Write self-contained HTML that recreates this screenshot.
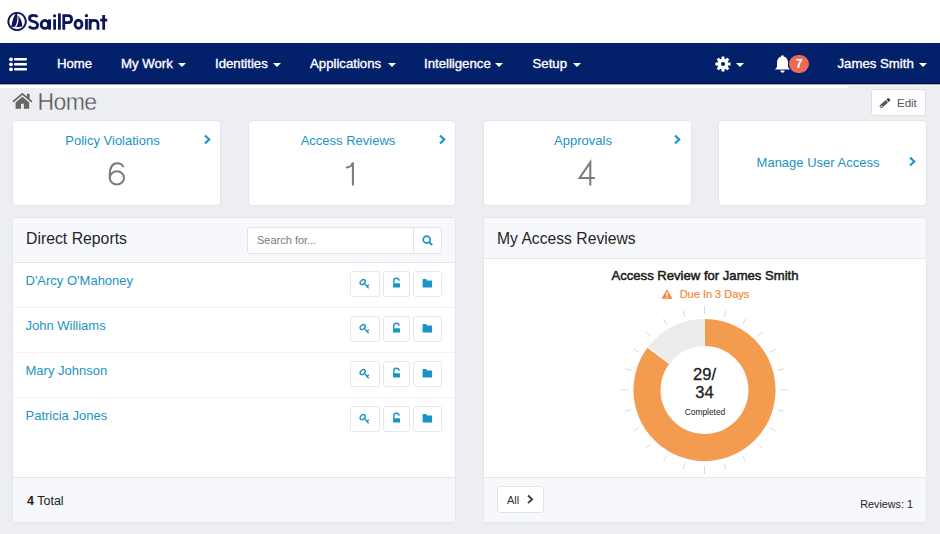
<!DOCTYPE html>
<html><head><meta charset="utf-8">
<style>
*{box-sizing:border-box;margin:0;padding:0}
html,body{width:940px;height:534px;overflow:hidden;background:#eceef2;font-family:"Liberation Sans",sans-serif;position:relative}
.abs{position:absolute}
#hdr{left:0;top:0;width:940px;height:43px;background:#fff}
#nav{left:0;top:43px;width:940px;height:40px;background:#03206a}
#navline{left:0;top:83px;width:940px;height:1px;background:#000a40}
#wh1{left:0;top:84px;width:940px;height:2px;background:linear-gradient(#a3a9c2 0 1px,#fff 1px 2px)}
#wh2{left:0;top:86px;width:848px;height:2px;background:#fff}
.nt{position:absolute;top:55.7px;color:#fff;font-size:13.2px;line-height:16px;white-space:nowrap;-webkit-text-stroke:0.35px #fff}
.caret{position:absolute;width:0;height:0;border-left:4px solid transparent;border-right:4px solid transparent;border-top:4.5px solid #fff;margin-left:-0.5px}
.card{position:absolute;top:120px;height:86px;background:#fff;border:1px solid #e2e5e9;border-radius:4px}
.ctitle{position:absolute;left:0;right:8px;text-align:center;color:#1b93c5;font-size:13px;line-height:16px;white-space:nowrap}
.cnum{position:absolute;left:0;right:0;text-align:center;color:#7a7a7a;font-size:33px;line-height:36px;-webkit-text-stroke:0.9px #fff}
.chev{position:absolute}
.panel{position:absolute;top:217px;height:306px;background:#fff;border:1px solid #e2e5e9;border-radius:4px;overflow:hidden}
.ph{position:absolute;left:0;top:0;right:0;background:#f7f8fb;border-bottom:1px solid #e4e6ed}
.ptitle{position:absolute;color:#262626;font-size:16px;line-height:20px;white-space:nowrap}
.row{position:absolute;left:1px;right:0;height:45px;margin-top:1px;border-bottom:1px solid #f0f2f5}
.name{position:absolute;left:11.5px;top:10px;color:#1b93c5;font-size:13px;line-height:16px;white-space:nowrap}
.ib{position:absolute;top:8px;height:26px;border:1px solid #e5e8ec;border-radius:3px;background:#fff}
.pf{position:absolute;left:0;right:0;bottom:0;height:45px;background:#f7f8fb;border-top:1px solid #e4e6ed}
</style></head><body>
<div id="hdr" class="abs"></div>
<!-- logo -->
<svg class="abs" style="left:0;top:0" width="120" height="43" viewBox="0 0 120 43">
  <g fill="#0b1657">
  <path d="M17.1 12.85 A8.65 8.65 0 1 1 17.09 12.85" fill="none" stroke="#0b1657" stroke-width="1.95"/>
  <path d="M16.5 12.0 C14.2 15.5 12.2 20.5 11.3 26.9 L15.0 26.8 C17.3 23.2 18.0 18 17.1 12.8 Z"/>
  <path d="M18.1 15.4 C21 18.3 22.4 22.5 22.2 26.4 L16.1 27.3 C18.6 23.5 19.0 19.5 18.1 15.4Z"/>
  </g>
  <g fill="none" stroke="#0b1657" stroke-width="2.8">
  <path d="M37.4 17.1 C36.6 15.8 35.2 15.35 33.5 15.35 C31.2 15.35 29.5 16.5 29.5 18.4 C29.5 22.4 37.6 20.6 37.6 24.9 C37.6 27.2 35.6 28.35 33.3 28.35 C31.4 28.35 29.9 27.7 29.0 26.3"/>
  <ellipse cx="44.9" cy="24.4" rx="3.75" ry="3.95"/>
  <path d="M49.6 19.3 V29.7"/>
  <path d="M54.6 19.3 V29.7"/>
  <path d="M59.4 13.4 V29.7"/>
  <path d="M63.8 29.7 V15.7 H68.1 C70.4 15.7 71.6 17.1 71.6 19.2 C71.6 21.3 70.4 22.6 68.1 22.6 H63.8"/>
  <ellipse cx="78.5" cy="24.3" rx="3.5" ry="4.05"/>
  <path d="M86.45 19.0 V29.7"/>
  <path d="M90.1 29.7 V19.0 M90.1 24 C90.1 21.4 91.6 20.4 93.8 20.4 C96.3 20.4 98 21.5 98 24.2 V29.7"/>
  <path d="M103.7 15.0 V29.7 M100.2 20.2 H107.3"/>
  </g>
  <circle cx="54.6" cy="15.85" r="1.65" fill="#0b1657"/>
  <circle cx="86.45" cy="15.7" r="1.65" fill="#0b1657"/>
</svg>
<div id="nav" class="abs"></div>
<div id="navline" class="abs"></div>
<div id="wh1" class="abs"></div>
<div id="wh2" class="abs"></div>
<!-- list icon -->
<svg class="abs" style="left:8px;top:55.5px" width="22" height="17" viewBox="0 0 22 17">
  <circle cx="3" cy="3.3" r="1.9" fill="#fff"/><circle cx="3" cy="8.3" r="1.9" fill="#fff"/><circle cx="3" cy="13.3" r="1.9" fill="#fff"/>
  <rect x="6" y="2" width="13" height="2.6" rx="1" fill="#fff"/><rect x="6" y="7" width="13" height="2.6" rx="1" fill="#fff"/><rect x="6" y="12" width="13" height="2.6" rx="1" fill="#fff"/>
</svg>
<div class="nt" style="left:57px">Home</div>
<div class="nt" style="left:121px">My Work</div><div class="caret" style="left:178px;top:63px"></div>
<div class="nt" style="left:215px">Identities</div><div class="caret" style="left:273.5px;top:63px"></div>
<div class="nt" style="left:310px">Applications</div><div class="caret" style="left:388px;top:63px"></div>
<div class="nt" style="left:424px">Intelligence</div><div class="caret" style="left:495.5px;top:63px"></div>
<div class="nt" style="left:532.5px">Setup</div><div class="caret" style="left:573px;top:63px"></div>
<!-- gear -->
<svg class="abs" style="left:714px;top:55px" width="18" height="18" viewBox="0 0 18 18">
  <g transform="translate(9 9)" fill="#fff">
    <rect x="-1.5" y="-7.6" width="3" height="15.2" rx="0.6"/>
    <rect x="-1.5" y="-7.6" width="3" height="15.2" rx="0.6" transform="rotate(45)"/>
    <rect x="-1.5" y="-7.6" width="3" height="15.2" rx="0.6" transform="rotate(90)"/>
    <rect x="-1.5" y="-7.6" width="3" height="15.2" rx="0.6" transform="rotate(135)"/>
    <circle r="5.5"/>
  </g>
  <circle cx="9" cy="9" r="2.1" fill="#03206a"/>
</svg>
<div class="caret" style="left:736.5px;top:63px"></div>
<!-- bell -->
<svg class="abs" style="left:773px;top:54px" width="19" height="20" viewBox="0 0 19 20">
  <path d="M9.5 1.2 C10.4 1.2 10.8 1.8 10.8 2.6 C13.6 3.3 15 5.6 15 8.6 L15 12.2 C15 13.6 16.2 14.6 17.4 15.6 L1.6 15.6 C2.8 14.6 4 13.6 4 12.2 L4 8.6 C4 5.6 5.4 3.3 8.2 2.6 C8.2 1.8 8.6 1.2 9.5 1.2Z" fill="#fff"/>
  <path d="M7.4 16.6 L11.6 16.6 C11.6 17.9 10.7 18.8 9.5 18.8 C8.3 18.8 7.4 17.9 7.4 16.6Z" fill="#fff"/>
</svg>
<div class="abs" style="left:789px;top:55px;width:20px;height:18px;border-radius:9px;background:#ef6a52;color:#fff;font-weight:700;font-size:12px;line-height:18px;text-align:center">7</div>
<div class="nt" style="left:837.5px">James Smith</div><div class="caret" style="left:919.5px;top:63px"></div>

<!-- page title -->
<svg class="abs" style="left:12px;top:92px" width="22" height="19" viewBox="0 0 22 19">
  <path d="M1.4 9.4 L10.4 1.9 L19.4 9.4" fill="none" stroke="#666" stroke-width="1.8" stroke-linecap="round" stroke-linejoin="round"/>
  <rect x="15" y="1.8" width="2.6" height="5" fill="#666"/>
  <path d="M10.4 4.7 L3.6 10.4 L3.6 16.7 L9 16.7 L9 11.8 L11.8 11.8 L11.8 16.7 L17.2 16.7 L17.2 10.4Z" fill="#666"/>
</svg>
<div class="abs" style="left:37.5px;top:89.7px;color:#555;font-size:23px;line-height:24px;letter-spacing:-0.6px;-webkit-text-stroke:0.35px #eceef2">Home</div>
<div class="abs" style="left:871px;top:89px;width:55px;height:27px;background:#fff;border:1px solid #dcdfe4;border-radius:3px"></div>
<svg class="abs" style="left:879px;top:97px" width="12" height="12" viewBox="0 0 12 12">
  <g transform="translate(6.1 5.9) rotate(-41) scale(0.86)"><path d="M-6.4 -1.9 H2.9 V1.9 H-6.4 C-7.2 1.9 -7.6 1.2 -7.6 0 C-7.6 -1.2 -7.2 -1.9 -6.4 -1.9Z" fill="#555"/><rect x="3.9" y="-1.9" width="2.8" height="3.8" rx="0.4" fill="#333"/><circle cx="-5.8" cy="0.2" r="0.9" fill="#fff"/></g>
</svg>
<div class="abs" style="left:897px;top:96px;color:#555;font-size:11.5px;line-height:14px">Edit</div>

<!-- cards -->
<div class="card" style="left:12px;width:209px"></div>
<div class="card" style="left:248px;width:208px"></div>
<div class="card" style="left:483px;width:209px"></div>
<div class="card" style="left:718px;width:209px"></div>


<!-- card contents -->
<div class="abs" style="left:13px;top:121px;width:207px;height:84px">
  <div class="ctitle" style="top:12px">Policy Violations</div>
</div>
<div class="abs" style="left:248px;top:121px;width:208px;height:84px">
  <div class="ctitle" style="top:12px">Access Reviews</div>
</div>
<div class="abs" style="left:483px;top:121px;width:208px;height:84px">
  <div class="ctitle" style="top:12px">Approvals</div>
</div>
<div class="abs" style="left:718px;top:121px;width:208px;height:84px">
  <div class="ctitle" style="top:34px">Manage User Access</div>
</div>
<svg class="chev" style="left:203px;top:134px" width="9" height="11" viewBox="0 0 9 11"><path d="M2 1.5 L6.2 5.5 L2 9.5" fill="none" stroke="#1b93c5" stroke-width="2.2"/></svg>
<svg class="chev" style="left:438px;top:134px" width="9" height="11" viewBox="0 0 9 11"><path d="M2 1.5 L6.2 5.5 L2 9.5" fill="none" stroke="#1b93c5" stroke-width="2.2"/></svg>
<svg class="chev" style="left:673px;top:134px" width="9" height="11" viewBox="0 0 9 11"><path d="M2 1.5 L6.2 5.5 L2 9.5" fill="none" stroke="#1b93c5" stroke-width="2.2"/></svg>
<svg class="chev" style="left:908px;top:156px" width="9" height="11" viewBox="0 0 9 11"><path d="M2 1.5 L6.2 5.5 L2 9.5" fill="none" stroke="#1b93c5" stroke-width="2.2"/></svg>


<svg class="abs" style="left:0;top:0;pointer-events:none" width="940" height="534" viewBox="0 0 940 534">
  <g fill="none" stroke="#7b7b7b" stroke-width="2.05" stroke-linecap="butt">
    <ellipse cx="116.9" cy="177.9" rx="7.1" ry="6.6"/>
    <path d="M123.5 167.3 C122.6 164.6 120.4 163.2 117.3 163.2 C111.9 163.2 109.7 168.3 109.7 175.5 C109.7 177.2 109.8 178.3 109.9 179"/>
    <path d="M352.9 185.4 V162.4 C352.2 165.6 350.2 167.4 346 167.4"/>
    <path d="M590.3 185.4 V162.4 L579.6 178 H595"/>
  </g>
</svg>

<!-- left panel -->
<div class="panel" style="left:12px;width:444px">
  <div class="ph" style="height:45px">
    <div class="ptitle" style="left:13px;top:11px;font-size:15.8px">Direct Reports</div>
    <div class="abs" style="left:234px;top:9px;width:167px;height:27px;background:#fff;border:1px solid #e0e3e8;border-radius:3px 0 0 3px"></div>
    <div class="abs" style="left:244px;top:15px;color:#7b7b7b;font-size:11px;line-height:14px">Search for...</div>
    <div class="abs" style="left:400px;top:9px;width:29px;height:27px;background:#fff;border:1px solid #e0e3e8;border-radius:0 3px 3px 0"></div>
    <svg class="abs" style="left:408px;top:16px" width="13" height="13" viewBox="0 0 13 13"><circle cx="5.7" cy="5.6" r="3.45" fill="none" stroke="#1b93c5" stroke-width="1.65"/><path d="M8.2 8.1 L10.6 10.5" stroke="#1b93c5" stroke-width="2" stroke-linecap="round"/></svg>
  </div>
  <div class="row" style="top:44px"><div class="name">D'Arcy O'Mahoney</div>
    <div class="ib" style="left:336px;width:30px"></div><div class="ib" style="left:369px;width:27px"></div><div class="ib" style="left:399px;width:29px"></div>
    <svg class="abs" style="left:341px;top:11px" width="20" height="20" viewBox="0 0 20 20"><g fill="none" stroke="#1b93c5" stroke-width="1.35"><ellipse cx="7.7" cy="8.1" rx="2.9" ry="2.0" transform="rotate(-40 7.7 8.1)"/><path d="M9.7 9.8 L13.6 14.2 M12.0 12.3 L13.9 10.8"/></g></svg>
    <svg class="abs" style="left:374px;top:11px" width="16" height="16" viewBox="0 0 16 16"><path d="M5.8 9.6 V6.8 C5.8 5.2 7 4.3 8.4 4.3 C9.8 4.3 11 5.2 11 6.7" fill="none" stroke="#1b93c5" stroke-width="1.4"/><rect x="5" y="9.3" width="7" height="4.3" rx="0.5" fill="#1b93c5"/></svg>
    <svg class="abs" style="left:404px;top:11px" width="18" height="16" viewBox="0 0 18 16"><path d="M4.6 5.6 C4.6 5.2 4.9 5 5.3 5 L8.2 5 L9 6.4 L13.4 6.4 C13.8 6.4 14.1 6.7 14.1 7.1 L14.1 12.9 C14.1 13.3 13.8 13.6 13.4 13.6 L5.3 13.6 C4.9 13.6 4.6 13.3 4.6 12.9Z" fill="#1b93c5"/></svg>
    </div><div class="row" style="top:89px"><div class="name">John Williams</div>
    <div class="ib" style="left:336px;width:30px"></div><div class="ib" style="left:369px;width:27px"></div><div class="ib" style="left:399px;width:29px"></div>
    <svg class="abs" style="left:341px;top:11px" width="20" height="20" viewBox="0 0 20 20"><g fill="none" stroke="#1b93c5" stroke-width="1.35"><ellipse cx="7.7" cy="8.1" rx="2.9" ry="2.0" transform="rotate(-40 7.7 8.1)"/><path d="M9.7 9.8 L13.6 14.2 M12.0 12.3 L13.9 10.8"/></g></svg>
    <svg class="abs" style="left:374px;top:11px" width="16" height="16" viewBox="0 0 16 16"><path d="M5.8 9.6 V6.8 C5.8 5.2 7 4.3 8.4 4.3 C9.8 4.3 11 5.2 11 6.7" fill="none" stroke="#1b93c5" stroke-width="1.4"/><rect x="5" y="9.3" width="7" height="4.3" rx="0.5" fill="#1b93c5"/></svg>
    <svg class="abs" style="left:404px;top:11px" width="18" height="16" viewBox="0 0 18 16"><path d="M4.6 5.6 C4.6 5.2 4.9 5 5.3 5 L8.2 5 L9 6.4 L13.4 6.4 C13.8 6.4 14.1 6.7 14.1 7.1 L14.1 12.9 C14.1 13.3 13.8 13.6 13.4 13.6 L5.3 13.6 C4.9 13.6 4.6 13.3 4.6 12.9Z" fill="#1b93c5"/></svg>
    </div><div class="row" style="top:134px"><div class="name">Mary Johnson</div>
    <div class="ib" style="left:336px;width:30px"></div><div class="ib" style="left:369px;width:27px"></div><div class="ib" style="left:399px;width:29px"></div>
    <svg class="abs" style="left:341px;top:11px" width="20" height="20" viewBox="0 0 20 20"><g fill="none" stroke="#1b93c5" stroke-width="1.35"><ellipse cx="7.7" cy="8.1" rx="2.9" ry="2.0" transform="rotate(-40 7.7 8.1)"/><path d="M9.7 9.8 L13.6 14.2 M12.0 12.3 L13.9 10.8"/></g></svg>
    <svg class="abs" style="left:374px;top:11px" width="16" height="16" viewBox="0 0 16 16"><path d="M5.8 9.6 V6.8 C5.8 5.2 7 4.3 8.4 4.3 C9.8 4.3 11 5.2 11 6.7" fill="none" stroke="#1b93c5" stroke-width="1.4"/><rect x="5" y="9.3" width="7" height="4.3" rx="0.5" fill="#1b93c5"/></svg>
    <svg class="abs" style="left:404px;top:11px" width="18" height="16" viewBox="0 0 18 16"><path d="M4.6 5.6 C4.6 5.2 4.9 5 5.3 5 L8.2 5 L9 6.4 L13.4 6.4 C13.8 6.4 14.1 6.7 14.1 7.1 L14.1 12.9 C14.1 13.3 13.8 13.6 13.4 13.6 L5.3 13.6 C4.9 13.6 4.6 13.3 4.6 12.9Z" fill="#1b93c5"/></svg>
    </div><div class="row" style="top:179px;border-bottom:none"><div class="name">Patricia Jones</div>
    <div class="ib" style="left:336px;width:30px"></div><div class="ib" style="left:369px;width:27px"></div><div class="ib" style="left:399px;width:29px"></div>
    <svg class="abs" style="left:341px;top:11px" width="20" height="20" viewBox="0 0 20 20"><g fill="none" stroke="#1b93c5" stroke-width="1.35"><ellipse cx="7.7" cy="8.1" rx="2.9" ry="2.0" transform="rotate(-40 7.7 8.1)"/><path d="M9.7 9.8 L13.6 14.2 M12.0 12.3 L13.9 10.8"/></g></svg>
    <svg class="abs" style="left:374px;top:11px" width="16" height="16" viewBox="0 0 16 16"><path d="M5.8 9.6 V6.8 C5.8 5.2 7 4.3 8.4 4.3 C9.8 4.3 11 5.2 11 6.7" fill="none" stroke="#1b93c5" stroke-width="1.4"/><rect x="5" y="9.3" width="7" height="4.3" rx="0.5" fill="#1b93c5"/></svg>
    <svg class="abs" style="left:404px;top:11px" width="18" height="16" viewBox="0 0 18 16"><path d="M4.6 5.6 C4.6 5.2 4.9 5 5.3 5 L8.2 5 L9 6.4 L13.4 6.4 C13.8 6.4 14.1 6.7 14.1 7.1 L14.1 12.9 C14.1 13.3 13.8 13.6 13.4 13.6 L5.3 13.6 C4.9 13.6 4.6 13.3 4.6 12.9Z" fill="#1b93c5"/></svg>
    </div>
  <div class="pf">
    <div class="abs" style="left:14px;top:14.8px;color:#222;font-size:12.5px;line-height:16px"><b>4</b> Total</div>
  </div>
</div>

<!-- right panel -->
<div class="panel" style="left:483px;width:444px">
  <div class="ph" style="height:41px">
    <div class="ptitle" style="left:13px;top:11px;font-size:15.7px">My Access Reviews</div>
  </div>
  <div class="abs" style="left:0;right:0;top:50px;text-align:center;color:#1a1a1a;font-weight:400;font-size:13.1px;line-height:16px;-webkit-text-stroke:0.5px #1a1a1a;letter-spacing:0">Access Review for James Smith</div>
  <div class="abs" style="left:0;right:0;top:69px;text-align:center;color:#f0883a;font-size:11px;line-height:14px;white-space:nowrap;-webkit-text-stroke:0.2px #f0883a">
    <svg style="vertical-align:-1px;margin-right:7px" width="12" height="10" viewBox="0 0 12 10"><path d="M6 0.3 L11.6 9.7 L0.4 9.7Z" fill="#f0883e"/><rect x="5.3" y="3.2" width="1.4" height="3.6" fill="#fff"/><rect x="5.3" y="7.6" width="1.4" height="1.3" fill="#fff"/></svg>Due In 3 Days
  </div>
  <svg class="abs" style="left:-0.8px;top:0.3px" width="443" height="304" viewBox="0 0 443 304">
  <g stroke="#d3d9e1" stroke-width="1"><line x1="221.50" y1="96.00" x2="221.50" y2="88.00"/><line x1="241.17" y1="98.59" x2="242.72" y2="92.79"/><line x1="259.50" y1="106.18" x2="262.50" y2="100.99"/><line x1="275.24" y1="118.26" x2="279.48" y2="114.02"/><line x1="287.32" y1="134.00" x2="292.51" y2="131.00"/><line x1="294.91" y1="152.33" x2="300.71" y2="150.78"/><line x1="297.50" y1="172.00" x2="305.50" y2="172.00"/><line x1="294.91" y1="191.67" x2="300.71" y2="193.22"/><line x1="287.32" y1="210.00" x2="292.51" y2="213.00"/><line x1="275.24" y1="225.74" x2="279.48" y2="229.98"/><line x1="259.50" y1="237.82" x2="262.50" y2="243.01"/><line x1="241.17" y1="245.41" x2="242.72" y2="251.21"/><line x1="221.50" y1="248.00" x2="221.50" y2="256.00"/><line x1="201.83" y1="245.41" x2="200.28" y2="251.21"/><line x1="183.50" y1="237.82" x2="180.50" y2="243.01"/><line x1="167.76" y1="225.74" x2="163.52" y2="229.98"/><line x1="155.68" y1="210.00" x2="150.49" y2="213.00"/><line x1="148.09" y1="191.67" x2="142.29" y2="193.22"/><line x1="145.50" y1="172.00" x2="137.50" y2="172.00"/><line x1="148.09" y1="152.33" x2="142.29" y2="150.78"/><line x1="155.68" y1="134.00" x2="150.49" y2="131.00"/><line x1="167.76" y1="118.26" x2="163.52" y2="114.02"/><line x1="183.50" y1="106.18" x2="180.50" y2="100.99"/><line x1="201.83" y1="98.59" x2="200.28" y2="92.79"/></g>
  <circle cx="221.5" cy="172" r="57.5" fill="none" stroke="#ececec" stroke-width="27"/>
  <path d="M221.50 101.00 A71 71 0 1 1 164.84 129.21 L186.39 145.48 A44 44 0 1 0 221.50 128.00Z" fill="#f39c50"/>
  <line x1="221.50" y1="101.00" x2="221.50" y2="128.00" stroke="#fff" stroke-width="1" opacity="0.7"/>
  <line x1="164.84" y1="129.21" x2="186.39" y2="145.48" stroke="#fff" stroke-width="1.2"/>
</svg>
<div class="abs" style="left:170.5px;top:148.3px;width:100px;text-align:center;color:#222;font-size:16.5px;line-height:17.6px;-webkit-text-stroke:0.3px #222">29/<br>34</div>
<div class="abs" style="left:171px;top:189px;width:100px;text-align:center;color:#222;font-size:8.4px;line-height:10px">Completed</div>

  <div class="pf">
    <div class="abs" style="left:13px;top:8px;width:47px;height:27px;background:#fff;border:1px solid #e0e3e8;border-radius:3px"></div>
    <div class="abs" style="left:23px;top:15px;color:#333;font-size:11px;line-height:14px">All</div>
    <svg class="abs" style="left:42px;top:16px" width="9" height="11" viewBox="0 0 9 11"><path d="M2 1.5 L6 5.3 L2 9.1" fill="none" stroke="#444" stroke-width="2"/></svg>
    <div class="abs" style="right:13px;top:18.5px;color:#222;font-size:10.8px;line-height:14px">Reviews: 1</div>
  </div>
</div>

</body></html>
